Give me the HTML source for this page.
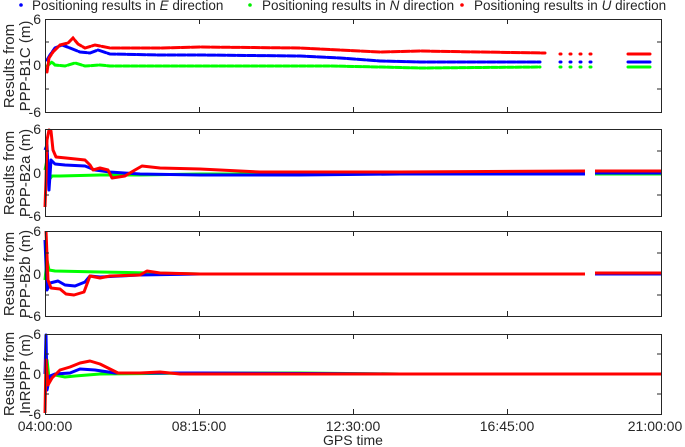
<!DOCTYPE html>
<html><head><style>
html,body{margin:0;padding:0;background:#fff;width:685px;height:447px;overflow:hidden}
svg{display:block}
text{font-family:"Liberation Sans",sans-serif;fill:#262626}
</style></head><body>
<svg width="685" height="447" viewBox="0 0 685 447">
<g font-size="13.5">
<circle cx="21" cy="5" r="1.8" fill="#00f"/><text x="32" y="10">Positioning results in <tspan font-style="italic">E</tspan> direction</text>
<circle cx="250" cy="5" r="1.8" fill="#0e0"/><text x="262" y="10">Positioning results in <tspan font-style="italic">N</tspan> direction</text>
<circle cx="462" cy="5" r="1.8" fill="#f00"/><text x="474" y="10">Positioning results in <tspan font-style="italic">U</tspan> direction</text>
</g>

<g fill="none" stroke-width="3" stroke-linecap="round">
<polyline stroke="#0f0" stroke-dasharray="6 2" points="47,66 52,62 55,65 65,66 75,63 85,66 100,65 110,66 330,66 380,67 420,68 540,67"/>
<polyline stroke="#00f" stroke-dasharray="8 2" points="47,60 50,55 55,48 62,45 70,48 80,52 90,53 98,50 110,54 160,55 200,55 300,56 340,58 380,61 420,62 480,62 540,62"/>
<polyline stroke="#f00" stroke-dasharray="8 2" points="47,72 49,58 53,52 60,45 68,43 73,38 78,44 85,48 95,45 110,48 160,48 200,47 300,48 340,50 380,52 420,51 480,52 545,53"/>
<g stroke-dasharray="1 9" stroke-width="3">
<line x1="560" y1="54" x2="600" y2="54" stroke="#f00"/><line x1="560" y1="62" x2="600" y2="62" stroke="#00f"/><line x1="560" y1="67" x2="600" y2="67" stroke="#0f0"/>
</g>
<polyline stroke="#f00" points="628,54 650,54"/><polyline stroke="#00f" points="628,62 650,62"/><polyline stroke="#0f0" points="628,67 650,67"/>
</g>

<g fill="none" stroke-width="3" stroke-linejoin="round">
<polyline stroke="#0f0" points="45,170 47,160 49,180 52,176 60,176 100,175 140,175 200,174 300,174 400,174 585,174"/>
<polyline stroke="#00f" points="45,150 47,145 49,190 51,160 55,164 65,165 85,166 95,170 110,172 140,174 200,175 300,175 400,174 585,174"/>
<polyline stroke="#f00" points="45,207 46,180 47,140 49,130 51,131 53,150 56,157 66,158 85,160 90,165 93,170 100,168 108,170 112,178 125,176 135,170 142,166 160,168 200,169 260,172 300,172 400,172 585,171"/>
<polyline stroke="#0f0" points="595,174 661,174"/><polyline stroke="#00f" points="595,173 661,173"/><polyline stroke="#f00" points="595,171 661,171"/>
</g>

<g fill="none" stroke-width="3" stroke-linejoin="round">
<polyline stroke="#0f0" points="45,280 47,260 49,270 55,271 100,272 150,273 200,274 400,274 585,274"/>
<polyline stroke="#00f" points="45,240 47,290 50,283 58,281 65,285 75,286 85,282 90,276 100,277 140,275 200,274 585,274"/>
<polyline stroke="#f00" points="46,231 48,280 51,288 60,289 66,294 74,295 84,292 90,276 100,278 110,276 140,275 147,271 160,273 200,274 300,274 585,274"/>
<polyline stroke="#0f0" points="595,274 661,274"/><polyline stroke="#00f" points="595,274 661,274"/><polyline stroke="#f00" points="595,273 661,273"/>
</g>

<g fill="none" stroke-width="3" stroke-linejoin="round">
<polyline stroke="#0f0" points="45,374 47,360 49,378 55,375 65,377 75,376 100,374 200,373 300,373 400,374 661,374"/>
<polyline stroke="#00f" points="45,374 46,335 47,390 50,376 55,374 70,373 80,369 95,370 115,373 200,373 400,374 661,374"/>
<polyline stroke="#f00" points="45,413 46,360 48,385 52,378 60,370 70,367 80,363 90,361 100,364 110,369 118,373 140,373 160,372 180,374 300,374 661,374"/>
</g>

<g fill="none" stroke="#262626" stroke-width="1">
<rect x="45.5" y="19.5" width="616" height="93"/>
<rect x="45.5" y="129.5" width="616" height="87"/>
<rect x="45.5" y="231.5" width="616" height="85"/>
<rect x="45.5" y="334.5" width="616" height="80"/>
<path d="M45 42h4M45 89h4M657 42h4M657 89h4
M45 151h4M45 195h4M657 151h4M657 195h4
M45 253h4M45 295h4M657 253h4M657 295h4
M45 354h4M45 394h4M657 354h4M657 394h4"/>
<path d="M199.5 19v5M353.5 19v5M507.5 19v5M199.5 112v-5M353.5 112v-5M507.5 112v-5
M199.5 129v5M353.5 129v5M507.5 129v5M199.5 216v-5M353.5 216v-5M507.5 216v-5
M199.5 231v5M353.5 231v5M507.5 231v5M199.5 316v-5M353.5 316v-5M507.5 316v-5
M199.5 334v5M353.5 334v5M507.5 334v5M199.5 414v-5M353.5 414v-5M507.5 414v-5"/>
</g>

<g font-size="14" text-anchor="end">
<text x="41" y="24">6</text><text x="41" y="70">0</text><text x="41" y="117">-6</text>
<text x="41" y="134">6</text><text x="41" y="178">0</text><text x="41" y="221">-6</text>
<text x="41" y="236">6</text><text x="41" y="279">0</text><text x="41" y="321">-6</text>
<text x="41" y="339">6</text><text x="41" y="379">0</text><text x="41" y="419">-6</text>
</g>
<g font-size="15" text-anchor="middle">
<text transform="translate(14,66) rotate(-90)">Results from</text>
<text transform="translate(30,66) rotate(-90)">PPP-B1C (m)</text>
<text transform="translate(14,173) rotate(-90)">Results from</text>
<text transform="translate(30,173) rotate(-90)">PPP-B2a (m)</text>
<text transform="translate(14,274) rotate(-90)">Results from</text>
<text transform="translate(30,274) rotate(-90)">PPP-B2b (m)</text>
<text transform="translate(14,374) rotate(-90)">Results from</text>
<text transform="translate(30,374) rotate(-90)">InRPPP (m)</text>
</g>
<g font-size="14" text-anchor="middle">
<text x="45" y="431">04:00:00</text><text x="199" y="431">08:15:00</text><text x="353" y="431">12:30:00</text><text x="507" y="431">16:45:00</text><text x="655" y="431">21:00:00</text>
<text x="353" y="445">GPS time</text>
</g>
</svg>
</body></html>
